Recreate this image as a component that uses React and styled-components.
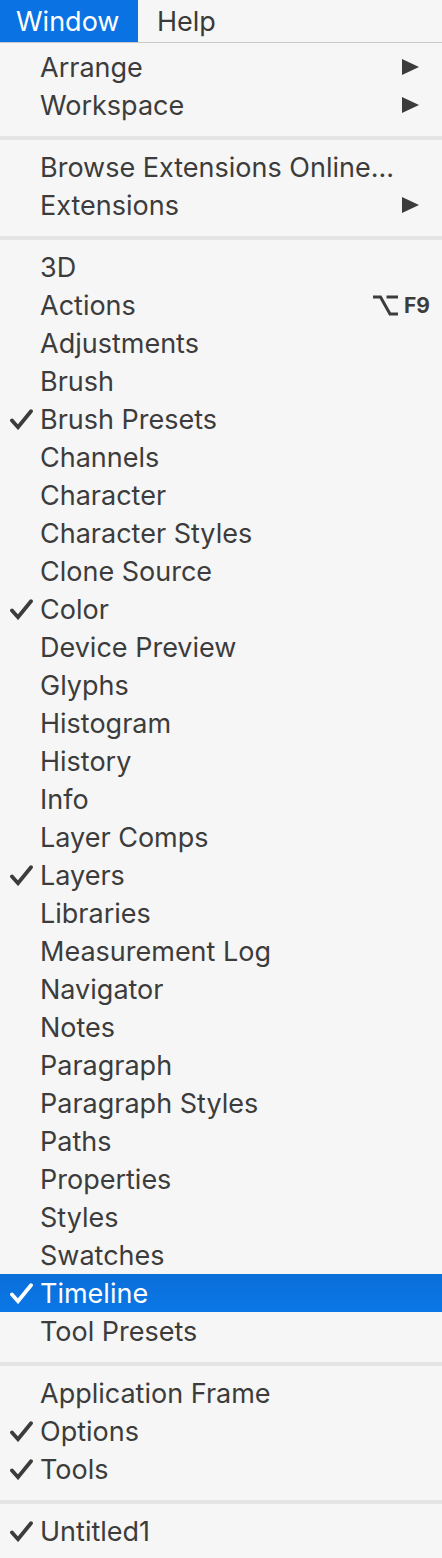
import React from 'react';
import styled, { createGlobalStyle } from 'styled-components';

const GlobalStyle = createGlobalStyle`
  html, body {
    margin: 0;
    padding: 0;
    background: #f6f6f6;
  }
  body {
    font-family: Inter, "Liberation Sans", sans-serif;
    -webkit-font-smoothing: antialiased;
  }
`;

const Page = styled.div`
  width: 442px;
  height: 1558px;
  background: #f6f6f6;
  display: flex;
  flex-direction: column;
  overflow: hidden;
`;

const MenuBar = styled.div`
  display: flex;
  height: 42px;
  border-bottom: 1px solid #c9c9c9;
`;

const MenuTitle = styled.div`
  display: flex;
  align-items: center;
  padding: ${({ active }) => (active ? '0 0 0 16px' : '0 0 0 19px')};
  width: ${({ active }) => (active ? '138px' : 'auto')};
  box-sizing: border-box;
  background: ${({ active }) => (active ? '#0a72e2' : 'transparent')};
  color: ${({ active }) => (active ? '#ffffff' : '#3a3a3a')};
  font-size: 27px;
`;

const Dropdown = styled.div`
  display: flex;
  flex-direction: column;
  padding-top: 5px;
`;

const Item = styled.div`
  display: flex;
  align-items: center;
  height: 38px;
  padding-left: 40px;
  padding-right: 23px;
  position: relative;
  background: ${({ selected }) => (selected ? 'linear-gradient(#0a6fd9, #0a77e6)' : 'transparent')};
  color: ${({ selected }) => (selected ? '#ffffff' : '#3c3c3c')};
  font-size: 27px;
`;

const Label = styled.span`
  flex: 1;
  white-space: nowrap;
`;

const CheckMark = styled.svg`
  position: absolute;
  left: 10px;
  top: 9px;
`;

const SubArrow = styled.svg`
  display: block;
`;

const Shortcut = styled.span`
  display: flex;
  align-items: center;
  gap: 6px;
  margin-right: -11px;
  font-size: 21px;
  font-weight: 700;
  color: #3c3c3c;
`;

const Separator = styled.div`
  height: 4px;
  margin: 12px 0 8px;
  background: #e4e4e4;
`;

const Check = ({ color }) => (
  <CheckMark width="23" height="21" viewBox="0 0 23 21">
    <path d="M2 11.5 L8 18.2 L21 2.2" fill="none" stroke={color} strokeWidth="3.8" strokeLinecap="round" strokeLinejoin="miter" />
  </CheckMark>
);

const Arrow = () => (
  <SubArrow width="17" height="16" viewBox="0 0 17 16">
    <path d="M0 0 L17 8 L0 16 Z" fill="#3c3c3c" />
  </SubArrow>
);

const OptionKey = () => (
  <svg width="25" height="21" viewBox="0 0 25 21">
    <path d="M0 2 H7.5 L17 19 H25 M13.5 2 H25" fill="none" stroke="#3c3c3c" strokeWidth="3" />
  </svg>
);

const groups = [
  [
    { label: 'Arrange', sub: true },
    { label: 'Workspace', sub: true },
  ],
  [
    { label: 'Browse Extensions Online...' },
    { label: 'Extensions', sub: true },
  ],
  [
    { label: '3D' },
    { label: 'Actions', shortcut: 'F9' },
    { label: 'Adjustments' },
    { label: 'Brush' },
    { label: 'Brush Presets', checked: true },
    { label: 'Channels' },
    { label: 'Character' },
    { label: 'Character Styles' },
    { label: 'Clone Source' },
    { label: 'Color', checked: true },
    { label: 'Device Preview' },
    { label: 'Glyphs' },
    { label: 'Histogram' },
    { label: 'History' },
    { label: 'Info' },
    { label: 'Layer Comps' },
    { label: 'Layers', checked: true },
    { label: 'Libraries' },
    { label: 'Measurement Log' },
    { label: 'Navigator' },
    { label: 'Notes' },
    { label: 'Paragraph' },
    { label: 'Paragraph Styles' },
    { label: 'Paths' },
    { label: 'Properties' },
    { label: 'Styles' },
    { label: 'Swatches' },
    { label: 'Timeline', checked: true, selected: true },
    { label: 'Tool Presets' },
  ],
  [
    { label: 'Application Frame' },
    { label: 'Options', checked: true },
    { label: 'Tools', checked: true },
  ],
  [
    { label: 'Untitled1', checked: true },
  ],
];

export default function App() {
  return (
    <Page>
      <GlobalStyle />
      <MenuBar>
        <MenuTitle active>Window</MenuTitle>
        <MenuTitle>Help</MenuTitle>
      </MenuBar>
      <Dropdown>
        {groups.map((group, gi) => (
          <React.Fragment key={gi}>
            {gi > 0 && <Separator />}
            {group.map((item) => (
              <Item key={item.label} selected={item.selected}>
                {item.checked && <Check color={item.selected ? '#ffffff' : '#3c3c3c'} />}
                <Label>{item.label}</Label>
                {item.sub && <Arrow />}
                {item.shortcut && (
                  <Shortcut>
                    <OptionKey />
                    {item.shortcut}
                  </Shortcut>
                )}
              </Item>
            ))}
          </React.Fragment>
        ))}
      </Dropdown>
    </Page>
  );
}
